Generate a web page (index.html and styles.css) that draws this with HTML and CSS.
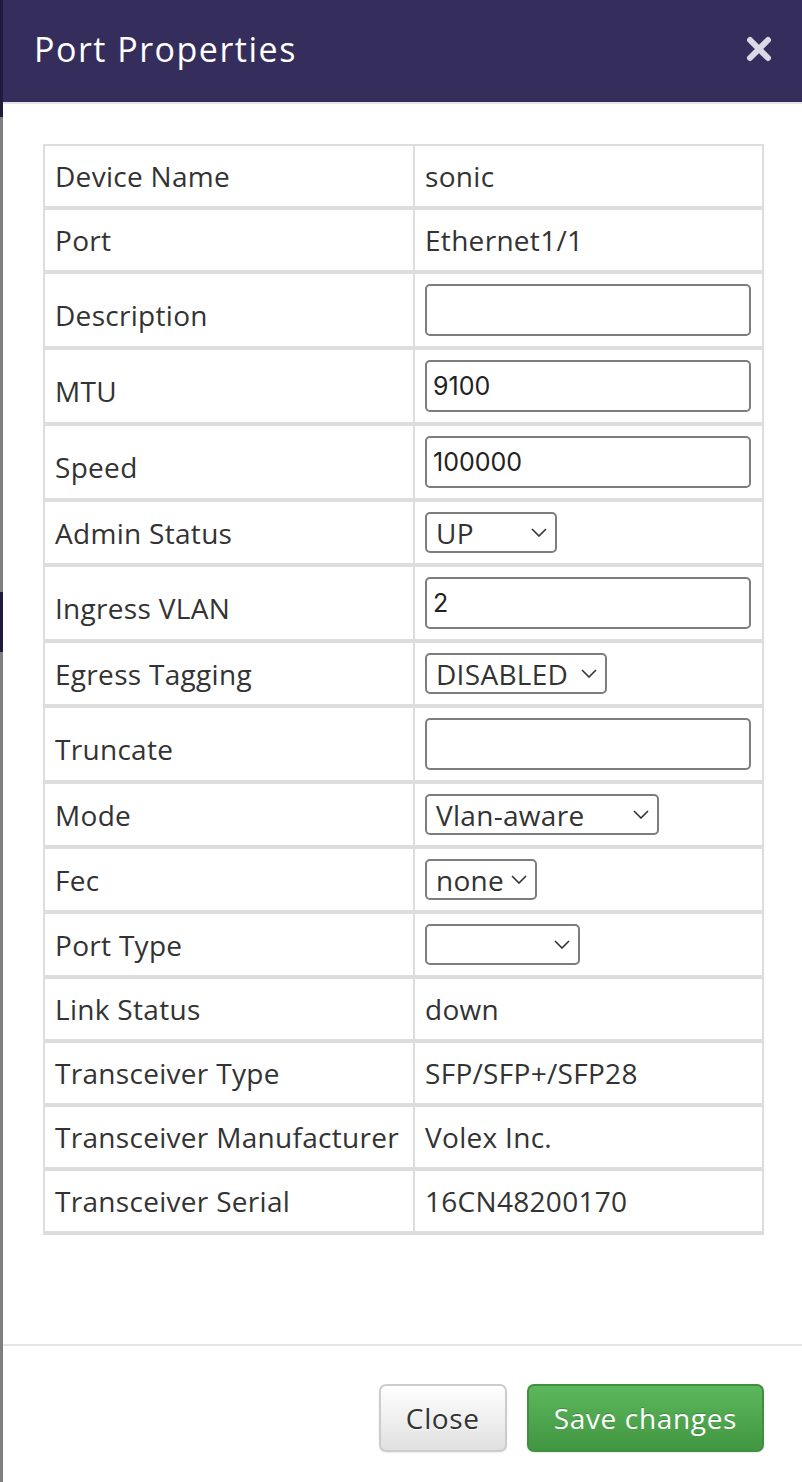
FILE: index.html
```html
<!DOCTYPE html>
<html lang="en">
<head>
<meta charset="utf-8">
<title>Port Properties</title>
<link rel="stylesheet" href="styles.css">
</head>
<body>
<div class="page">
  <div class="backdrop">
    <span class="bd-seg bd-navy bd-top"></span>
    <span class="bd-seg bd-gray bd-mid"></span>
    <span class="bd-seg bd-navy bd-band"></span>
    <span class="bd-seg bd-gray bd-rest"></span>
  </div>
  <div class="modal">
    <header class="modal-header">
      <h4 class="modal-title">Port Properties</h4>
      <button class="close" aria-label="Close">
        <svg width="26" height="26" viewBox="0 0 26 26"><path d="M4 4 L22 22 M22 4 L4 22" stroke="#dcd9e6" stroke-width="6" stroke-linecap="round"/></svg>
      </button>
    </header>
    <div class="modal-body">
      <table class="props">
        <tr><td class="label">Device Name</td><td class="value">sonic</td></tr>
        <tr><td class="label">Port</td><td class="value">Ethernet1/1</td></tr>
        <tr class="input-row"><td class="label">Description</td><td class="value"><input class="field" type="text" value=""></td></tr>
        <tr class="input-row"><td class="label">MTU</td><td class="value"><input class="field" type="text" value="9100"></td></tr>
        <tr class="input-row"><td class="label">Speed</td><td class="value"><input class="field" type="text" value="100000"></td></tr>
        <tr class="select-row"><td class="label">Admin Status</td><td class="value"><div class="select sel-up"><span>UP</span><svg class="chev" width="16" height="9" viewBox="0 0 16 9"><path d="M1 1 L8 8 L15 1" fill="none" stroke="#333" stroke-width="1.6"/></svg></div></td></tr>
        <tr class="input-row"><td class="label">Ingress VLAN</td><td class="value"><input class="field" type="text" value="2"></td></tr>
        <tr class="select-row"><td class="label">Egress Tagging</td><td class="value"><div class="select sel-dis"><span>DISABLED</span><svg class="chev" width="16" height="9" viewBox="0 0 16 9"><path d="M1 1 L8 8 L15 1" fill="none" stroke="#333" stroke-width="1.6"/></svg></div></td></tr>
        <tr class="input-row"><td class="label">Truncate</td><td class="value"><input class="field" type="text" value=""></td></tr>
        <tr class="select-row"><td class="label">Mode</td><td class="value"><div class="select sel-mode"><span>Vlan-aware</span><svg class="chev" width="16" height="9" viewBox="0 0 16 9"><path d="M1 1 L8 8 L15 1" fill="none" stroke="#333" stroke-width="1.6"/></svg></div></td></tr>
        <tr class="select-row"><td class="label">Fec</td><td class="value"><div class="select sel-fec"><span>none</span><svg class="chev" width="16" height="9" viewBox="0 0 16 9"><path d="M1 1 L8 8 L15 1" fill="none" stroke="#333" stroke-width="1.6"/></svg></div></td></tr>
        <tr class="select-row"><td class="label">Port Type</td><td class="value"><div class="select sel-type"><span></span><svg class="chev" width="16" height="9" viewBox="0 0 16 9"><path d="M1 1 L8 8 L15 1" fill="none" stroke="#333" stroke-width="1.6"/></svg></div></td></tr>
        <tr><td class="label">Link Status</td><td class="value">down</td></tr>
        <tr><td class="label">Transceiver Type</td><td class="value">SFP/SFP+/SFP28</td></tr>
        <tr><td class="label">Transceiver Manufacturer</td><td class="value">Volex Inc.</td></tr>
        <tr><td class="label">Transceiver Serial</td><td class="value">16CN48200170</td></tr>
      </table>
    </div>
    <footer class="modal-footer">
      <button class="btn btn-default">Close</button>
      <button class="btn btn-success">Save changes</button>
    </footer>
  </div>
</div>
</body>
</html>
```
FILE: styles.css
```css
* { box-sizing: border-box; }

html, body {
  margin: 0;
  padding: 0;
  background: #fff;
}

body {
  font-family: "Open Sans", "Noto Sans", sans-serif;
  color: #333;
}

.page {
  display: flex;
  min-height: 1482px;
}

.backdrop {
  width: 3px;
  display: flex;
  flex-direction: column;
  flex: none;
}

.bd-seg { display: block; }
.bd-navy { background: #1f1b3b; }
.bd-gray { background: #7f7f7f; }
.bd-top { height: 117px; }
.bd-mid { height: 475px; }
.bd-band { height: 60px; }
.bd-rest { flex: 1; }

.modal {
  flex: 1;
  display: flex;
  flex-direction: column;
  background: #fff;
}

.modal-header {
  height: 104px;
  background: #352e5d;
  border-bottom: 2px solid #e5e5e5;
  display: flex;
  align-items: center;
  justify-content: space-between;
  padding: 0 30px 0 31px;
}

.modal-title {
  margin: 0;
  font-weight: 400;
  font-size: 34px;
  letter-spacing: 1.5px;
  line-height: 40px;
  color: #fff;
  padding-bottom: 4px;
}

.close {
  border: 0;
  background: transparent;
  padding: 0;
  width: 26px;
  height: 26px;
  display: flex;
  margin-bottom: 4px;
}

.modal-body {
  padding: 40px 38px 109px 40px;
}

.props {
  width: 100%;
  border-collapse: separate;
  border-spacing: 0;
  border: 2px solid #ddd;
  border-bottom: 0;
}

.props td {
  border-bottom: 4px solid #ddd;
  vertical-align: middle;
  padding: 10px 10px;
  font-size: 28px;
  letter-spacing: 0.3px;
  line-height: 40px;
  color: #333;
  white-space: nowrap;
}

.props td.label {
  width: 370px;
  border-right: 2px solid #ddd;
  padding-left: 10px;
  padding-right: 10px;
}

.props .input-row td.label {
  padding-top: 20px;
}

.select-row td {
  padding-top: 10px;
  padding-bottom: 10px;
}

.field {
  display: block;
  width: 326px;
  height: 52px;
  border: 2px solid #7d7d7d;
  border-radius: 5px;
  padding: 0 6px;
  font-family: Inter, "Liberation Sans", sans-serif;
  font-size: 25px;
  color: #222;
  background: #fff;
}

.select {
  display: flex;
  align-items: center;
  justify-content: space-between;
  height: 41px;
  border: 2px solid #7d7d7d;
  border-radius: 5px;
  padding: 0 8px 0 9px;
  font-size: 28px;
  line-height: 36px;
  color: #333;
  background: #fff;
}

.select span { letter-spacing: 0.3px; }
.chev { flex: none; }

.sel-up { width: 132px; }
.sel-dis { width: 182px; }
.sel-mode { width: 234px; }
.sel-fec { width: 112px; }
.sel-type { width: 155px; }

.modal-footer {
  border-top: 2px solid #e5e5e5;
  padding: 38px 38px 0 40px;
  display: flex;
  justify-content: flex-end;
  gap: 20px;
}

.btn {
  height: 68px;
  padding: 0 25px;
  border: 2px solid;
  border-radius: 7px;
  font-family: "Open Sans", "Noto Sans", sans-serif;
  font-size: 28px;
  letter-spacing: 0.65px;
  line-height: 1;
}

.btn-default {
  color: #333;
  border-color: #ccc;
  background: linear-gradient(to bottom, #fff 0%, #e0e0e0 100%);
  text-shadow: 0 1px 0 #fff;
  box-shadow: 0 1px 2px rgba(0,0,0,0.08);
}

.btn-success {
  color: #fff;
  border-color: #3e8f3e;
  background: linear-gradient(to bottom, #5cb85c 0%, #419641 100%);
  text-shadow: 0 -1px 0 rgba(0,0,0,0.2);
  box-shadow: 0 1px 2px rgba(0,0,0,0.08);
}
```
